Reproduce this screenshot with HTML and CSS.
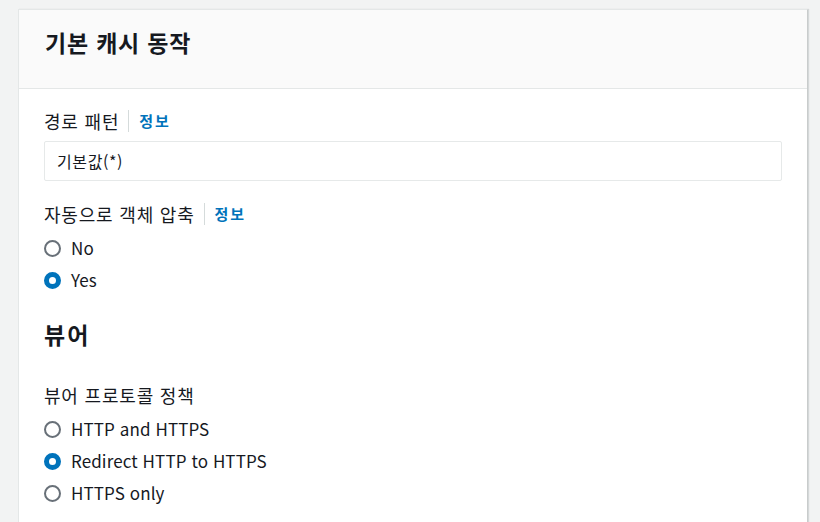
FILE: index.html
```html
<!DOCTYPE html>
<html lang="ko">
<head>
<meta charset="utf-8">
<link rel="stylesheet" href="styles.css">
</head>
<body>
<div class="card">
  <div class="card-header">
    <h2 class="title">기본 캐시 동작</h2>
  </div>
  <div class="card-body">
    <div class="label-row">
      <span class="label">경로 패턴</span>
      <span class="sep"></span>
      <a class="info">정보</a>
    </div>
    <div class="input">기본값(*)</div>

    <div class="label-row label-gap">
      <span class="label">자동으로 객체 압축</span>
      <span class="sep"></span>
      <a class="info">정보</a>
    </div>
    <div class="radios">
      <div class="radio-row"><span class="radio"></span><span class="rtext">No</span></div>
      <div class="radio-row"><span class="radio checked"></span><span class="rtext">Yes</span></div>
    </div>

    <h3 class="section">뷰어</h3>

    <div class="label-row label-plain">
      <span class="label">뷰어 프로토콜 정책</span>
    </div>
    <div class="radios">
      <div class="radio-row"><span class="radio"></span><span class="rtext">HTTP and HTTPS</span></div>
      <div class="radio-row"><span class="radio checked"></span><span class="rtext">Redirect HTTP to HTTPS</span></div>
      <div class="radio-row"><span class="radio"></span><span class="rtext">HTTPS only</span></div>
    </div>
  </div>
</div>
</body>
</html>
```
FILE: styles.css
```css
html, body {
  margin: 0;
  padding: 0;
}
body {
  background: #f2f3f3;
  font-family: "Noto Sans CJK KR", "Noto Sans", sans-serif;
  color: #16191f;
  padding: 9px 12px 0 18px;
  height: 522px;
  box-sizing: border-box;
  overflow: hidden;
}
.card {
  background: #ffffff;
  border: 1px solid #e4e7e7;
  border-right-color: #c9cccc;
  border-bottom: none;
  box-shadow: 1px 0 1px rgba(0, 28, 36, 0.12);
  height: 513px;
  box-sizing: border-box;
  overflow: hidden;
}
.card-header {
  background: #fafafa;
  border-bottom: 1px solid #e4e7e7;
  display: flex;
  align-items: flex-start;
  padding: 17px 0 0 26px;
  box-sizing: border-box;
  height: 79px;
}
.title {
  margin: 0;
  font-size: 23px;
  font-weight: 700;
  line-height: 30px;
  letter-spacing: 0.8px;
}
.card-body {
  padding: 21px 25px 0 25px;
}
.label-row {
  display: flex;
  align-items: center;
  height: 22px;
}
.label {
  font-size: 18px;
  line-height: 22px;
  letter-spacing: 0.8px;
}
.sep {
  width: 1px;
  height: 22px;
  background: #d5dbdb;
  margin: 0 10px 0 9px;
}
.info {
  color: #0073bb;
  font-size: 15px;
  font-weight: 700;
  line-height: 22px;
  letter-spacing: 2px;
}
.input {
  margin-top: 9px;
  height: 40px;
  box-sizing: border-box;
  border: 1px solid #e6e9e9;
  border-radius: 2px;
  display: flex;
  align-items: center;
  padding-left: 12px;
  font-size: 16px;
  letter-spacing: 0.6px;
}
.label-gap {
  margin-top: 22px;
}
.radios {
  margin-top: 7px;
  display: flex;
  flex-direction: column;
}
.radio-row {
  display: flex;
  align-items: center;
  height: 32px;
}
.radio {
  width: 17px;
  height: 17px;
  box-sizing: border-box;
  border: 2px solid #687078;
  border-radius: 50%;
  background: #fff;
  margin-right: 10px;
  flex-shrink: 0;
}
.radio.checked {
  border: 5.5px solid #0073bb;
}
.rtext {
  font-size: 17px;
  line-height: 22px;
  letter-spacing: 0.1px;
}
.section {
  margin: 23px 0 0 0;
  font-size: 23px;
  font-weight: 700;
  line-height: 30px;
  letter-spacing: 2px;
}
.label-plain {
  margin-top: 35px;
}
```
